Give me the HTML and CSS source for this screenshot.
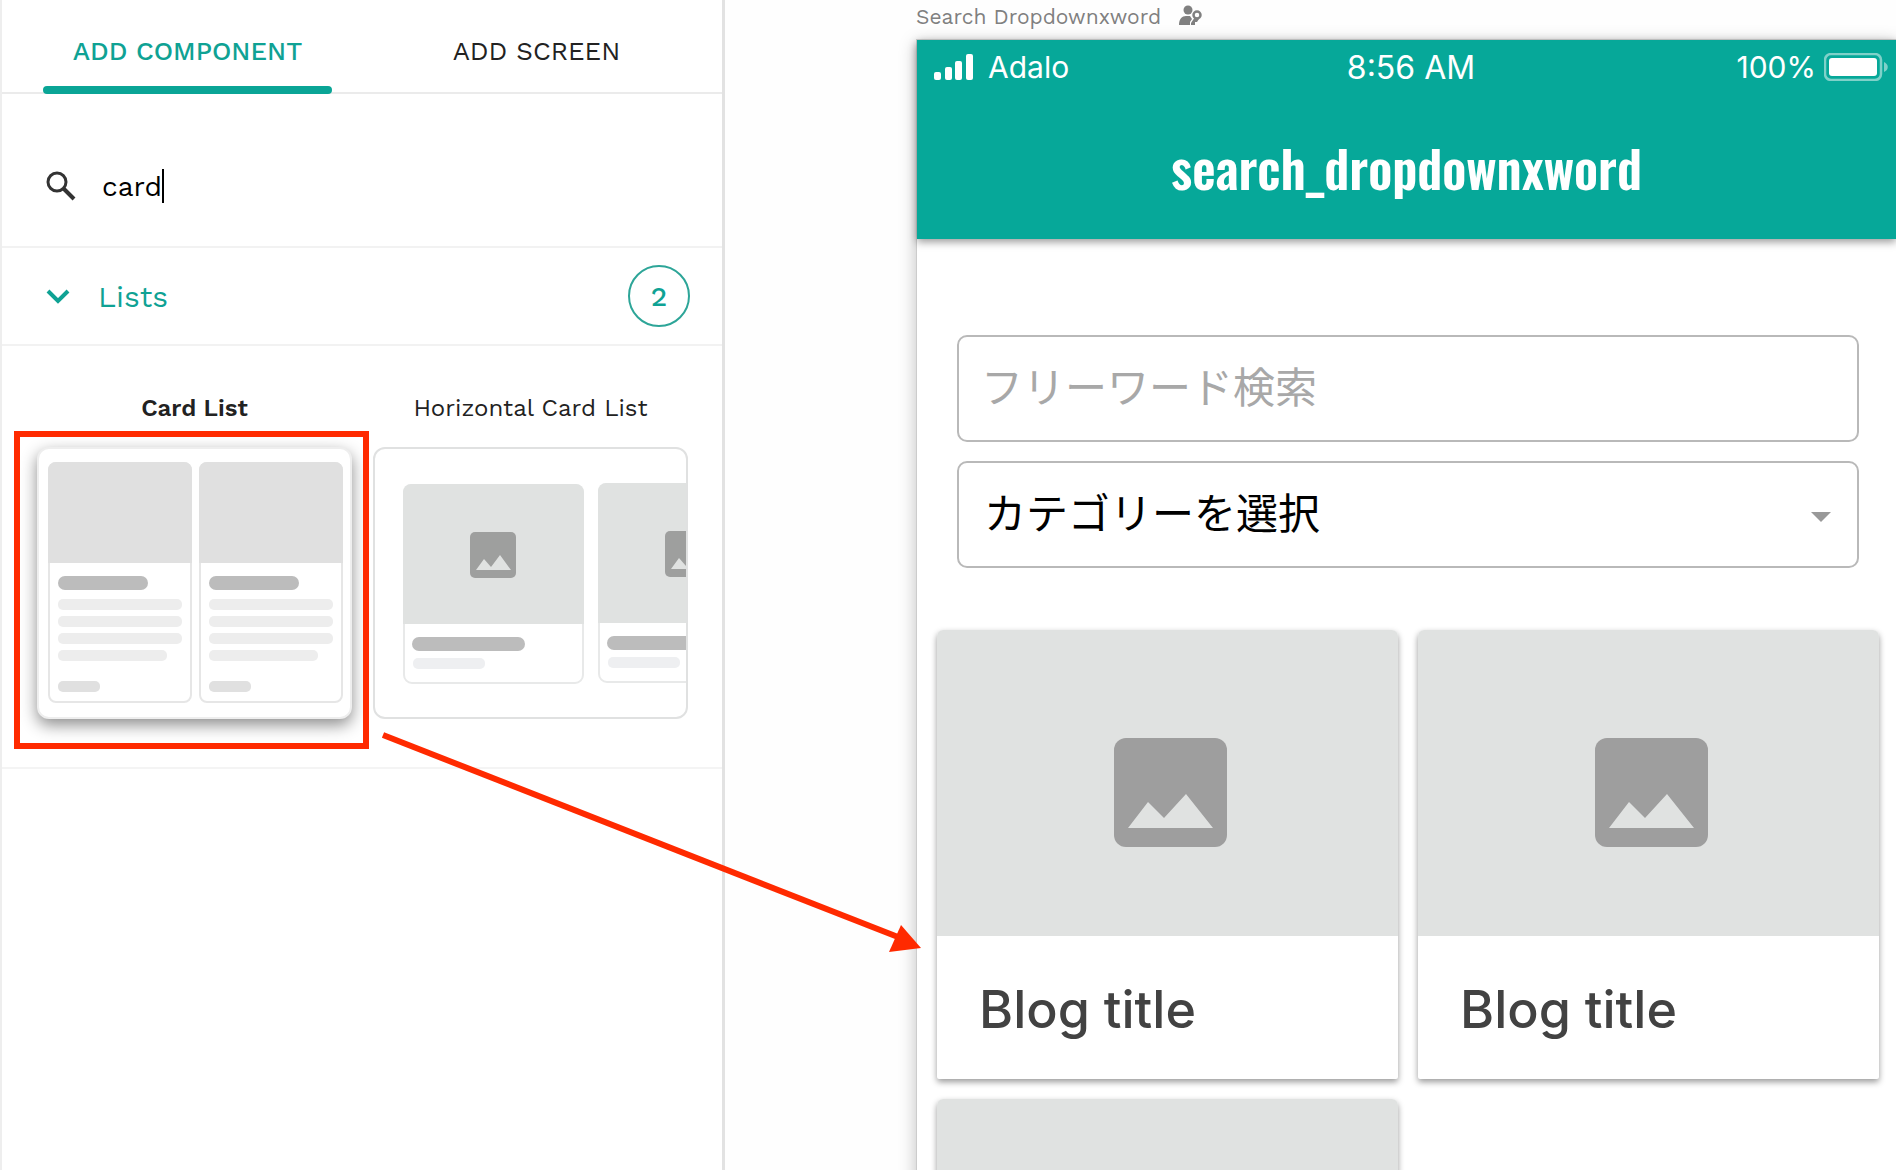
FILE: index.html
```html
<!DOCTYPE html>
<html lang="en">
<head>
    <meta charset="UTF-8">
    <meta name="viewport" content="width=device-width, initial-scale=1.0">
    <title>Search Dropdownxword</title>
    <link rel="stylesheet" href="styles.css">
</head>
<body>

<!-- Shared shapes -->
<svg class="defs" aria-hidden="true">
    <symbol id="picture" viewBox="0 0 113 109">
        <rect width="113" height="109" rx="12" fill="#9e9e9e"/>
        <path d="M14 90L34 64L50 80L72 56L99 90Z" fill="#e0e2e1"/>
    </symbol>
    <symbol id="mini-card" viewBox="0 0 144 241">
        <rect x="1" y="1" width="142" height="239" rx="7" fill="#fff" stroke="#e6e6e6" stroke-width="2"/>
        <path d="M0 101V8a8 8 0 0 1 8-8h128a8 8 0 0 1 8 8v93z" fill="#e0e0e0"/>
        <rect x="10" y="114" width="90" height="14" rx="7" fill="#bcbcbc"/>
        <g fill="#ededed">
            <rect x="10" y="137" width="124" height="11" rx="5"/>
            <rect x="10" y="154" width="124" height="11" rx="5"/>
            <rect x="10" y="171" width="124" height="11" rx="5"/>
            <rect x="10" y="188" width="109" height="11" rx="5"/>
        </g>
        <rect x="10" y="219" width="42" height="11" rx="5" fill="#e0e0e0"/>
    </symbol>
    <symbol id="mini-slide" viewBox="0 0 181 200">
        <rect x="1" y="1" width="179" height="198" rx="8" fill="#fff" stroke="#e8e9e9" stroke-width="2"/>
        <path d="M0 140V8a8 8 0 0 1 8-8h165a8 8 0 0 1 8 8v132z" fill="#e0e2e1"/>
        <rect x="67" y="48" width="46" height="46" rx="5" fill="#9e9f9e"/>
        <path d="M73 86L81 75L88 83L97 71L108 86Z" fill="#e0e2e1"/>
        <rect x="9" y="153" width="113" height="14" rx="7" fill="#bcbcbc"/>
        <rect x="10" y="174" width="72" height="11" rx="5" fill="#eeeff1"/>
    </symbol>
</svg>

<div class="editor">
    <aside class="panel">
        <nav class="tabs">
            <button class="tab active" type="button">ADD COMPONENT</button>
            <button class="tab" type="button">ADD SCREEN</button>
        </nav>

        <div class="search">
            <label for="componentSearch" aria-label="Search components">
                <svg width="30" height="30" viewBox="0 0 30 30" fill="none" stroke="#333">
                    <circle cx="11" cy="11" r="9" stroke-width="3"/>
                    <path d="M17.500 17.500L28 28" stroke-width="4"/>
                </svg>
            </label>
            <input id="componentSearch" type="text" value="card" autocomplete="off">
            <span class="caret"></span>
        </div>

        <button class="group" type="button">
            <svg width="24" height="16" viewBox="0 0 24 16" fill="none" stroke="#0fa294" stroke-width="4">
                <path d="M2 3L12 13L22 3"/>
            </svg>
            <span class="group-name">Lists</span>
            <span class="count">2</span>
        </button>

        <div class="components">
            <figure class="component selected">
                <figcaption>Card List</figcaption>
                <div class="thumb">
                    <svg viewBox="2 2 311 268">
                        <use href="#mini-card" x="11" y="15" width="144" height="241"/>
                        <use href="#mini-card" x="162" y="15" width="144" height="241"/>
                    </svg>
                </div>
            </figure>
            <figure class="component">
                <figcaption>Horizontal Card List</figcaption>
                <div class="thumb">
                    <svg viewBox="2 2 311 268">
                        <use href="#mini-slide" x="30" y="37" width="181" height="200"/>
                        <use href="#mini-slide" x="225" y="36" width="181" height="200"/>
                    </svg>
                </div>
            </figure>
        </div>
    </aside>

    <main class="canvas">
        <div class="screen-label">
            <span>Search Dropdownxword</span>
            <svg width="24" height="22" viewBox="0 0 24 22" fill="#808080">
                <circle cx="9" cy="5" r="4.500"/>
                <path d="M0 20c0-6 3-9 7-9h4l2 3-2 3v3z"/>
                <circle cx="18" cy="10" r="3.500" fill="none" stroke="#808080" stroke-width="2.500"/>
                <path d="M16 12l-4 6v2h4v-3h2l2-3z"/>
            </svg>
        </div>

        <div class="phone">
            <header class="app-bar">
                <div class="status">
                    <div class="carrier">
                        <svg width="40" height="26" viewBox="0 0 40 26" fill="#fff">
                            <rect y="18" width="7" height="8" rx="2"/>
                            <rect x="11" y="13" width="7" height="13" rx="2"/>
                            <rect x="21" y="7" width="7" height="19" rx="2"/>
                            <rect x="32" width="7" height="26" rx="2"/>
                        </svg>
                        <span>Adalo</span>
                    </div>
                    <span class="clock">8:56 AM</span>
                    <div class="battery">
                        <span>100%</span>
                        <svg width="64" height="28" viewBox="0 0 64 28">
                            <rect x="1" y="1" width="56" height="26" rx="6" fill="none" stroke="#7fd1c9" stroke-width="2.500"/>
                            <rect x="5" y="5" width="48" height="18" rx="3" fill="#fff"/>
                            <path d="M60 9c5 2 5 8 0 10z" fill="#7fd1c9"/>
                        </svg>
                    </div>
                </div>
                <h1>search_dropdownxword</h1>
            </header>

            <form class="filters">
                <input class="field" type="text" placeholder="フリーワード検索" aria-label="フリーワード検索">
                <div class="select-wrap">
                    <select class="field" aria-label="カテゴリーを選択">
                        <option>カテゴリーを選択</option>
                    </select>
                </div>
            </form>

            <div class="cards">
                <article class="card">
                    <div class="card-image"><svg width="113" height="109"><use href="#picture"/></svg></div>
                    <h2>Blog title</h2>
                </article>
                <article class="card">
                    <div class="card-image"><svg width="113" height="109"><use href="#picture"/></svg></div>
                    <h2>Blog title</h2>
                </article>
                <article class="card">
                    <div class="card-image"></div>
                </article>
            </div>
        </div>
    </main>

    <!-- Pointer from the component to the phone screen -->
    <svg class="pointer" width="560" height="240" viewBox="0 0 560 240">
        <path d="M3 15L518 217" stroke="#ff2a00" stroke-width="6"/>
        <path d="M541 228L521 205L509 232Z" fill="#ff2a00"/>
    </svg>
</div>

</body>
</html>
```

FILE: styles.css
```css
* {
    box-sizing: border-box;
}
body {
    margin: 0;
    font-family: "Work Sans", Inter, "Liberation Sans", sans-serif;
    background-color: #fefefe;
    color: #222;
}
button, input, select {
    font: inherit;
    color: inherit;
    background: none;
    border: none;
    padding: 0;
}
button {
    cursor: pointer;
}
.defs {
    display: none;
}
.editor {
    position: relative;
    display: flex;
    height: 100vh;
    overflow: hidden;
}

/* Left panel */
.panel {
    width: 725px;
    flex-shrink: 0;
    background-color: #fff;
    border-left: 2px solid #eee;
    border-right: 3px solid #e2e2e2;
}
.tabs {
    display: flex;
    gap: 60px;
    height: 94px;
    padding: 0 41px;
    border-bottom: 2px solid #ebebeb;
}
.tab {
    position: relative;
    flex: 1;
    height: 94px;
    padding-top: 8px;
    font-size: 26px;
}
.tab.active {
    color: #0fa294;
    font-weight: 500;
}
.tab.active::after {
    content: "";
    position: absolute;
    inset: auto 0 0;
    height: 8px;
    border-radius: 4px;
    background-color: #0aa596;
}
.search {
    display: flex;
    align-items: center;
    height: 154px;
    padding: 32px 44px 0;
    border-bottom: 2px solid #f2f2f2;
    font-size: 28px;
    color: #000;
}
.search label {
    display: flex;
    margin-right: 26px;
}
.search input {
    field-sizing: content;
    outline: none;
}
.caret {
    width: 2px;
    height: 34px;
    background-color: #000;
}
.group {
    display: flex;
    align-items: center;
    width: 100%;
    height: 98px;
    padding: 0 32px 0 44px;
    border-bottom: 2px solid #f2f2f2;
    color: #0fa294;
    font-size: 30px;
}
.group-name {
    margin-left: 28px;
}
.count {
    display: flex;
    align-items: center;
    justify-content: center;
    width: 62px;
    height: 62px;
    margin-left: auto;
    border: 2px solid #2da598;
    border-radius: 50%;
    font-size: 28px;
    font-weight: 500;
}
.components {
    display: grid;
    grid-template-columns: 1fr 1fr;
    gap: 21px;
    padding: 46px 34px 48px 35px;
    border-bottom: 2px solid #f4f4f4;
}
.component {
    position: relative;
    margin: 0;
}
.component figcaption {
    margin-bottom: 23px;
    font-size: 24px;
    line-height: 32px;
    text-align: center;
    white-space: nowrap;
}
.component.selected figcaption {
    font-weight: 600;
}
.thumb {
    overflow: hidden;
    border: 2px solid #e0e1e1;
    border-radius: 12px;
    background-color: #fff;
}
.thumb svg {
    display: block;
    width: 100%;
}
.selected .thumb {
    border-color: #eee;
    box-shadow: 0 6px 16px rgba(0, 0, 0, 0.45);
}
.selected::after {
    content: "";
    position: absolute;
    inset: 39px -17px -30px -23px;
    border: 6px solid #ff2a00;
}

/* Phone preview */
.canvas {
    flex: 1;
    padding-left: 191px;
}
.screen-label {
    display: flex;
    align-items: center;
    gap: 18px;
    height: 39px;
    padding-bottom: 7px;
    font-size: 21px;
    color: #808080;
}
.phone {
    min-height: 100%;
    border: 1px solid #ccc;
    border-right: none;
    background-color: #fff;
    box-shadow: 0 4px 16px rgba(0, 0, 0, 0.25);
}
.app-bar {
    height: 199px;
    background-color: #06a899;
    color: #fff;
    box-shadow: 0 3px 8px rgba(0, 0, 0, 0.4);
}
.status {
    display: grid;
    grid-template-columns: 1fr auto 1fr;
    align-items: center;
    height: 54px;
    padding: 0 8px 0 17px;
    font-family: Inter, "Liberation Sans", sans-serif;
    font-size: 30px;
}
.carrier, .battery {
    display: flex;
    align-items: center;
}
.carrier {
    gap: 14px;
}
.clock {
    font-size: 32px;
}
.battery {
    justify-content: flex-end;
    gap: 8px;
}
.app-bar h1 {
    margin: 41px 0 0;
    font-family: Oswald, "Roboto Condensed", "Liberation Sans Narrow", Roboto, sans-serif;
    font-size: 51px;
    font-weight: 600;
    line-height: 64px;
    text-align: center;
}
.filters {
    display: grid;
    gap: 19px;
    padding: 96px 37px 62px 40px;
}
.field {
    display: block;
    width: 100%;
    height: 107px;
    padding: 0 22px 8px;
    border: 2px solid #b9b9b9;
    border-radius: 10px;
    font-family: "Noto Sans CJK JP", sans-serif;
    font-size: 42px;
    color: #000;
    appearance: none;
}
select.field {
    padding-left: 25px;
}
.field::placeholder {
    color: #a8a8a8;
}
.select-wrap {
    position: relative;
}
.select-wrap::after {
    content: "";
    position: absolute;
    top: 51px;
    right: 28px;
    border: 10px solid transparent;
    border-top-color: #999;
    border-bottom: none;
}
.cards {
    display: grid;
    grid-template-columns: 1fr 1fr;
    gap: 20px;
    padding: 0 17px 0 20px;
}
.card {
    overflow: hidden;
    border-radius: 6px 6px 2px 2px;
    background-color: #fff;
    box-shadow: 0 3px 6px rgba(0, 0, 0, 0.4);
}
.card-image {
    display: flex;
    align-items: center;
    justify-content: center;
    height: 306px;
    padding: 18px 0 0 6px;
    background-color: #e0e2e1;
}
.card h2 {
    margin: 0;
    padding: 44px 42px 39px;
    font-family: Inter, "Liberation Sans", sans-serif;
    font-size: 52px;
    font-weight: 500;
    line-height: 60px;
    color: #424242;
}

/* Annotation */
.pointer {
    position: absolute;
    top: 720px;
    left: 380px;
}
```
